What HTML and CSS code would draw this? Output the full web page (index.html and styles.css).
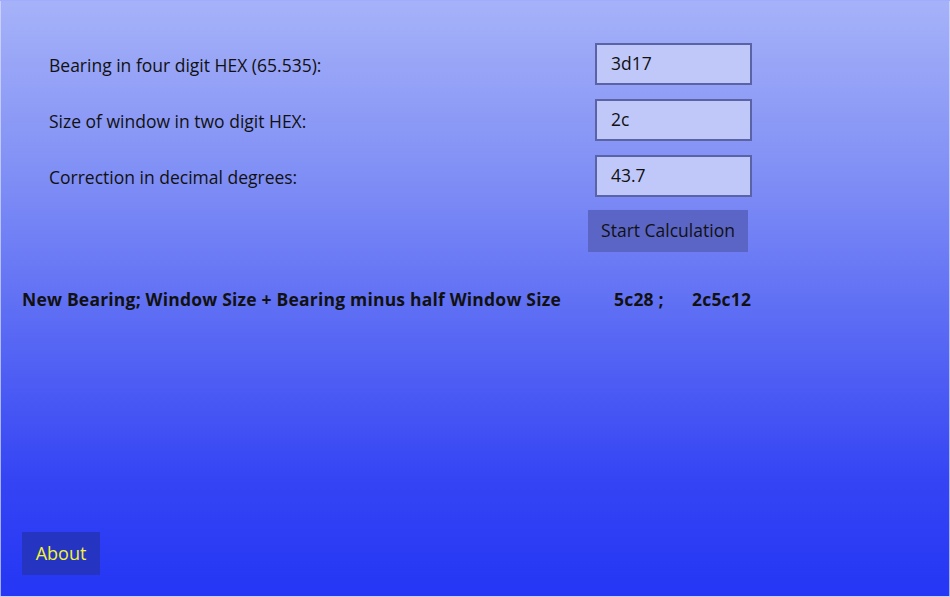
FILE: index.html
```html
<!DOCTYPE html>
<html>
<head>
<meta charset="utf-8">
<link rel="stylesheet" href="styles.css">
</head>
<body>
<div class="app">
  <div class="form">
    <div class="label">Bearing in four digit HEX (65.535):</div>
    <div class="field">3d17</div>
    <div class="label">Size of window in two digit HEX:</div>
    <div class="field">2c</div>
    <div class="label">Correction in decimal degrees:</div>
    <div class="field">43.7</div>
    <div></div>
    <div class="btn-cell"><button class="calc">Start Calculation</button></div>
  </div>
  <div class="result">
    <span class="result-label">New Bearing; Window Size + Bearing minus half Window Size</span>
    <span class="result-a">5c28 ;</span>
    <span class="result-b">2c5c12</span>
  </div>
  <div class="footer">
    <button class="about">About</button>
  </div>
</div>
</body>
</html>
```

FILE: styles.css
```css
html, body {
  margin: 0;
  padding: 0;
}
body {
  width: 950px;
  height: 597px;
  overflow: hidden;
  font-family: "Open Sans", "Noto Sans", sans-serif;
  color: #111;
}
.app {
  box-sizing: border-box;
  width: 950px;
  height: 597px;
  border: 1px solid rgba(215, 222, 255, 0.7);
  background: linear-gradient(to bottom, #a6b2f8 0%, #7f8ef5 30%, #5a6af4 55%, #3545f4 80%, #2536f5 100%);
  display: flex;
  flex-direction: column;
  padding: 42px 0 21px 21px;
}
.form {
  display: grid;
  grid-template-columns: 546px 157px;
  grid-auto-rows: 42px;
  row-gap: 14px;
  padding-left: 27px;
}
.label {
  font-size: 17.5px;
  display: flex;
  align-items: center;
  padding-top: 2px;
}
.field {
  box-sizing: border-box;
  height: 42px;
  border: 2px solid #5a63a6;
  background: #c0c8fa;
  font-size: 17.5px;
  padding: 0 14px;
  display: flex;
  align-items: center;
  padding-bottom: 2px;
}
.btn-cell {
  margin-left: -7px;
  margin-top: -1px;
}
.calc {
  width: 160px;
  height: 42px;
  border: none;
  background: #5b65c6;
  font-family: inherit;
  font-size: 17.5px;
  color: #111;
  padding: 0 0 2px;
}
.result {
  margin-top: 35px;
  display: flex;
  font-weight: bold;
  font-size: 17.5px;
  letter-spacing: 0.2px;
  line-height: 22px;
}
.result-label {
  width: 592px;
}
.result-a {
  width: 78px;
}
.footer {
  margin-top: auto;
}
.about {
  width: 78px;
  height: 43px;
  border: none;
  background: #2535c2;
  color: #f2f23a;
  font-family: inherit;
  font-size: 18px;
  padding: 0 0 2px;
}
```
